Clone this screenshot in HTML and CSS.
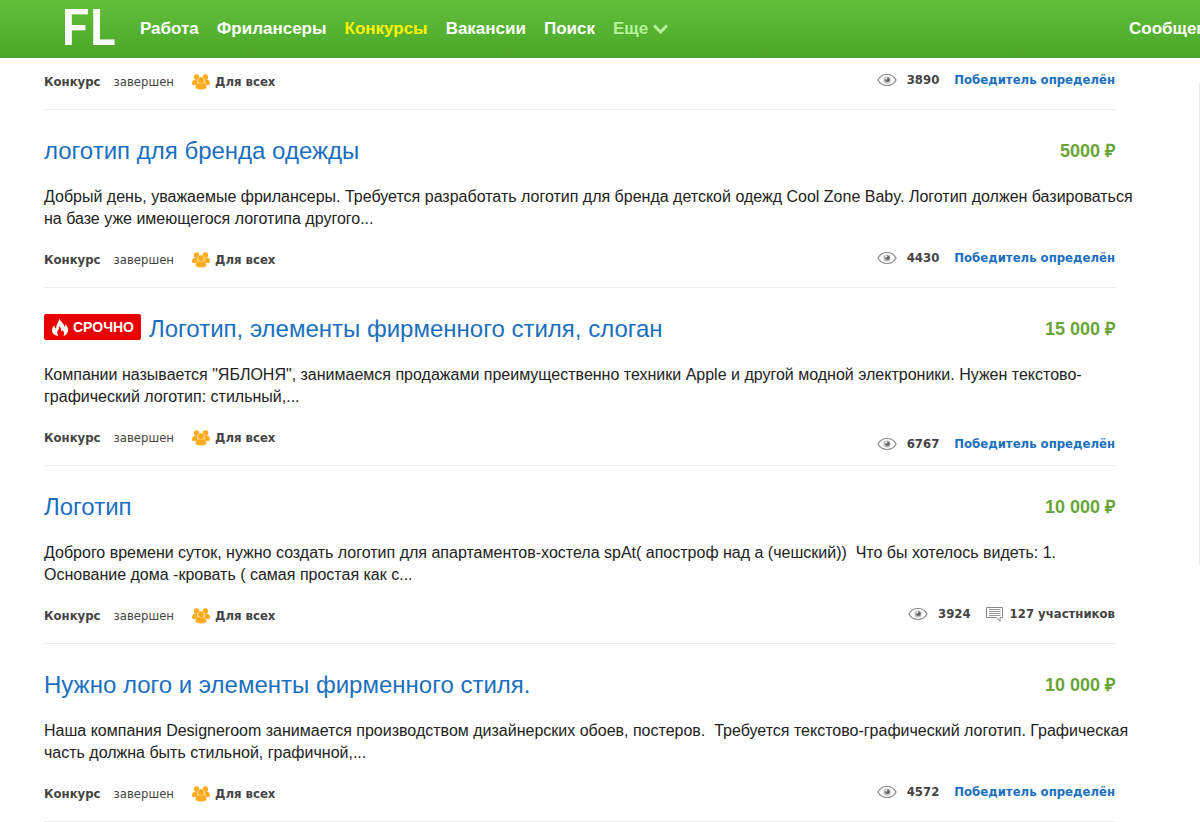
FILE: index.html
```html
<!DOCTYPE html>
<html lang="ru">

<head>
    <meta charset="UTF-8">
    <meta name="viewport" content="width=device-width, initial-scale=1.0">
    <title>Конкурсы</title>
    <link rel="stylesheet" href="styles.css">
</head>

<body>
    <!-- общие иконки -->
    <svg class="sprite" aria-hidden="true">
        <symbol id="eye" viewBox="0 0 20 14">
            <path d="M1 7C3 3 6 1.500 10 1.500S17 3 19 7C17 11 14 12.500 10 12.500S3 11 1 7Z" fill="none" stroke="#888" stroke-width="1.200"/>
            <circle cx="10" cy="7" r="3.500" fill="#bbb"/>
            <circle cx="10.500" cy="6.800" r="2.300" fill="#666"/>
            <circle cx="9.300" cy="5.500" r="1" fill="#fff"/>
        </symbol>
        <symbol id="people" viewBox="0 0 18 16">
            <g fill="#fdab1c">
                <circle cx="4.500" cy="3" r="2.700"/>
                <circle cx="13.500" cy="3" r="2.700"/>
                <path d="M0 9.500C0 6.500 2 5 5 5.500L6 11H1.500Q0 11 0 9.500ZM18 9.500C18 6.500 16 5 13 5.500L12 11H16.500Q18 11 18 9.500Z"/>
            </g>
            <g fill="#fdab1c" stroke="#ffe0a8" stroke-width=".6">
                <path d="M3.500 14C3.500 10 5.500 8.500 9 8.500S14.500 10 14.500 14Q12.500 15.500 9 15.500T3.500 14Z"/>
                <circle cx="9" cy="6.300" r="3.300"/>
            </g>
        </symbol>
    </svg>

    <header class="header">
        <a class="logo" href="#">FL</a>
        <nav class="nav">
            <a href="#">Работа</a>
            <a href="#">Фрилансеры</a>
            <a class="active" href="#">Конкурсы</a>
            <a href="#">Вакансии</a>
            <a href="#">Поиск</a>
            <button class="more" type="button">Еще
                <svg width="15" height="10" viewBox="0 0 15 10" aria-hidden="true"><path d="M1 1.500L7.500 8L14 1.500" fill="none" stroke="currentColor" stroke-width="3"/></svg>
            </button>
        </nav>
        <a class="messages" href="#">Сообщения</a>
    </header>

    <div class="page">
        <main class="list">
            <article class="item">
                <div class="meta">
                    <b>Конкурс</b><span class="state">завершен</span>
                    <svg class="people"><use href="#people"/></svg><b>Для всех</b>
                    <div class="stats">
                        <svg class="eye"><use href="#eye"/></svg><b>3890</b>
                        <a href="#">Победитель определён</a>
                    </div>
                </div>
            </article>

            <article class="item">
                <div class="head">
                    <h2><a href="#">логотип для бренда одежды</a></h2>
                    <span class="price">5000 ₽</span>
                </div>
                <p>Добрый день, уважаемые фрилансеры. Требуется разработать логотип для бренда детской одежд Cool Zone Baby. Логотип должен базироваться на базе уже имеющегося логотипа другого...</p>
                <div class="meta">
                    <b>Конкурс</b><span class="state">завершен</span>
                    <svg class="people"><use href="#people"/></svg><b>Для всех</b>
                    <div class="stats">
                        <svg class="eye"><use href="#eye"/></svg><b>4430</b>
                        <a href="#">Победитель определён</a>
                    </div>
                </div>
            </article>

            <article class="item urgent">
                <div class="head">
                    <span class="badge">
                        <svg width="18" height="20" viewBox="0 0 18 20" aria-hidden="true"><path d="M8 1C9 4.500 13 6 13.500 10Q14.500 9 14.500 7Q17.500 10.500 17 14Q16 18 12.500 19Q14 15.500 11.500 13Q11 14.500 10 14.500Q10.500 11 8 9Q8.500 12 6.500 14Q5.500 16 7 19Q1.500 18 1 14Q.5 11 3 8.500Q3.500 11 5 11.500Q5 8 7 5.500Q8.500 3.500 8 1Z" fill="#fff"/></svg>СРОЧНО
                    </span>
                    <h2><a href="#">Логотип, элементы фирменного стиля, слоган</a></h2>
                    <span class="price">15 000 ₽</span>
                </div>
                <p>Компании называется "ЯБЛОНЯ", занимаемся продажами преимущественно техники Apple и другой модной электроники. Нужен текстово-графический логотип: стильный,...</p>
                <div class="meta">
                    <b>Конкурс</b><span class="state">завершен</span>
                    <svg class="people"><use href="#people"/></svg><b>Для всех</b>
                    <div class="stats">
                        <svg class="eye"><use href="#eye"/></svg><b>6767</b>
                        <a href="#">Победитель определён</a>
                    </div>
                </div>
            </article>

            <article class="item">
                <div class="head">
                    <h2><a href="#">Логотип</a></h2>
                    <span class="price">10 000 ₽</span>
                </div>
                <p>Доброго времени суток, нужно создать логотип для апартаментов-хостела spAt( апостроф над а (чешский))&nbsp; Что бы хотелось видеть: 1. Основание дома -кровать ( самая простая как с...</p>
                <div class="meta">
                    <b>Конкурс</b><span class="state">завершен</span>
                    <svg class="people"><use href="#people"/></svg><b>Для всех</b>
                    <div class="stats">
                        <svg class="eye"><use href="#eye"/></svg><b>3924</b>
                        <svg class="comment" viewBox="0 0 18 16"><path d="M.5 1.500H16.500V11.500H14V15.500L10.500 11.500H.5Z" fill="#fff" stroke="#888"/><path d="M3 3.500H14.500M3 5.500H14.500M3 7.500H14.500M3 9.500H14.500" stroke="#999"/></svg><b>127 участников</b>
                    </div>
                </div>
            </article>

            <article class="item">
                <div class="head">
                    <h2><a href="#">Нужно лого и элементы фирменного стиля.</a></h2>
                    <span class="price">10 000 ₽</span>
                </div>
                <p>Наша компания Designeroom занимается производством дизайнерских обоев, постеров.&nbsp; Требуется текстово-графический логотип. Графическая часть должна быть стильной, графичной,...</p>
                <div class="meta">
                    <b>Конкурс</b><span class="state">завершен</span>
                    <svg class="people"><use href="#people"/></svg><b>Для всех</b>
                    <div class="stats">
                        <svg class="eye"><use href="#eye"/></svg><b>4572</b>
                        <a href="#">Победитель определён</a>
                    </div>
                </div>
            </article>
        </main>
        <aside class="side"></aside>
    </div>
</body>

</html>
```
FILE: styles.css
```css
* {
    box-sizing: border-box;
}

body,
h2,
p {
    margin: 0;
    padding: 0;
}

body {
    font-family: "Liberation Sans", Arial, sans-serif;
    font-size: 16px;
    color: #222;
    background: #fff;
    overflow-x: hidden;
}

a {
    color: #1a6fbf;
    text-decoration: none;
}

.sprite {
    display: none;
}

.header {
    display: flex;
    align-items: center;
    height: 58px;
    padding-left: 61px;
    background: linear-gradient(#62bf3a, #4ba629);
    white-space: nowrap;
}

.logo {
    width: 79px;
    padding-bottom: 6px;
    font: bold 50px/50px Lato, sans-serif;
    color: #fff;
}

.nav {
    display: flex;
    flex: 1;
    align-items: center;
    gap: 18px;
}

.nav a,
.more,
.messages {
    font: bold 17px "Liberation Sans", Arial, sans-serif;
    color: #fff;
}

.nav .active {
    color: #fff200;
}

.nav .more {
    display: flex;
    align-items: center;
    gap: 5px;
    padding: 0;
    border: 0;
    background: none;
    color: #b5f29a;
}

.messages {
    width: 71px;
}

.page {
    display: flex;
    padding: 13px 0 0 44px;
}

.list {
    flex: 1;
    min-width: 0;
}

.side {
    width: 85px;
    height: 484px;
    margin-top: 11px;
    border-right: 1px solid #e8eef0;
}

.item {
    padding: 24px 0 16px;
    border-bottom: 1px solid #ececec;
}

.item:first-child {
    padding-top: 0;
}

.head {
    display: flex;
    align-items: center;
    height: 34px;
}

.head h2 {
    flex: 1;
    font-size: 24px;
    font-weight: normal;
}

.price {
    padding-bottom: 2px;
    font-size: 18px;
    font-weight: bold;
    color: #67a636;
}

.badge {
    display: flex;
    align-items: center;
    gap: 4px;
    height: 26px;
    margin: 0 8px 4px 0;
    padding: 0 7px;
    border-radius: 2px;
    background: #ea0000;
    font-size: 14px;
    font-weight: bold;
    color: #fff;
}

.item p {
    margin: 18px -24px 19px 0;
    line-height: 22px;
}

.meta {
    display: flex;
    align-items: center;
    height: 22px;
    font: 13px/22px "DejaVu Sans Condensed", Tahoma, sans-serif;
    color: #444;
}

.state {
    margin: 0 18px 0 13px;
}

.people {
    width: 18px;
    height: 16px;
    margin-right: 5px;
}

.stats {
    display: flex;
    align-items: center;
    align-self: flex-start;
    margin-left: auto;
    line-height: 17px;
}

.stats a {
    margin-left: 15px;
    font-weight: bold;
}

.urgent .stats {
    margin-top: 8px;
}

.eye {
    width: 20px;
    height: 14px;
    margin-right: 10px;
}

.comment {
    width: 18px;
    height: 16px;
    margin: 0 6px 0 15px;
}
```
